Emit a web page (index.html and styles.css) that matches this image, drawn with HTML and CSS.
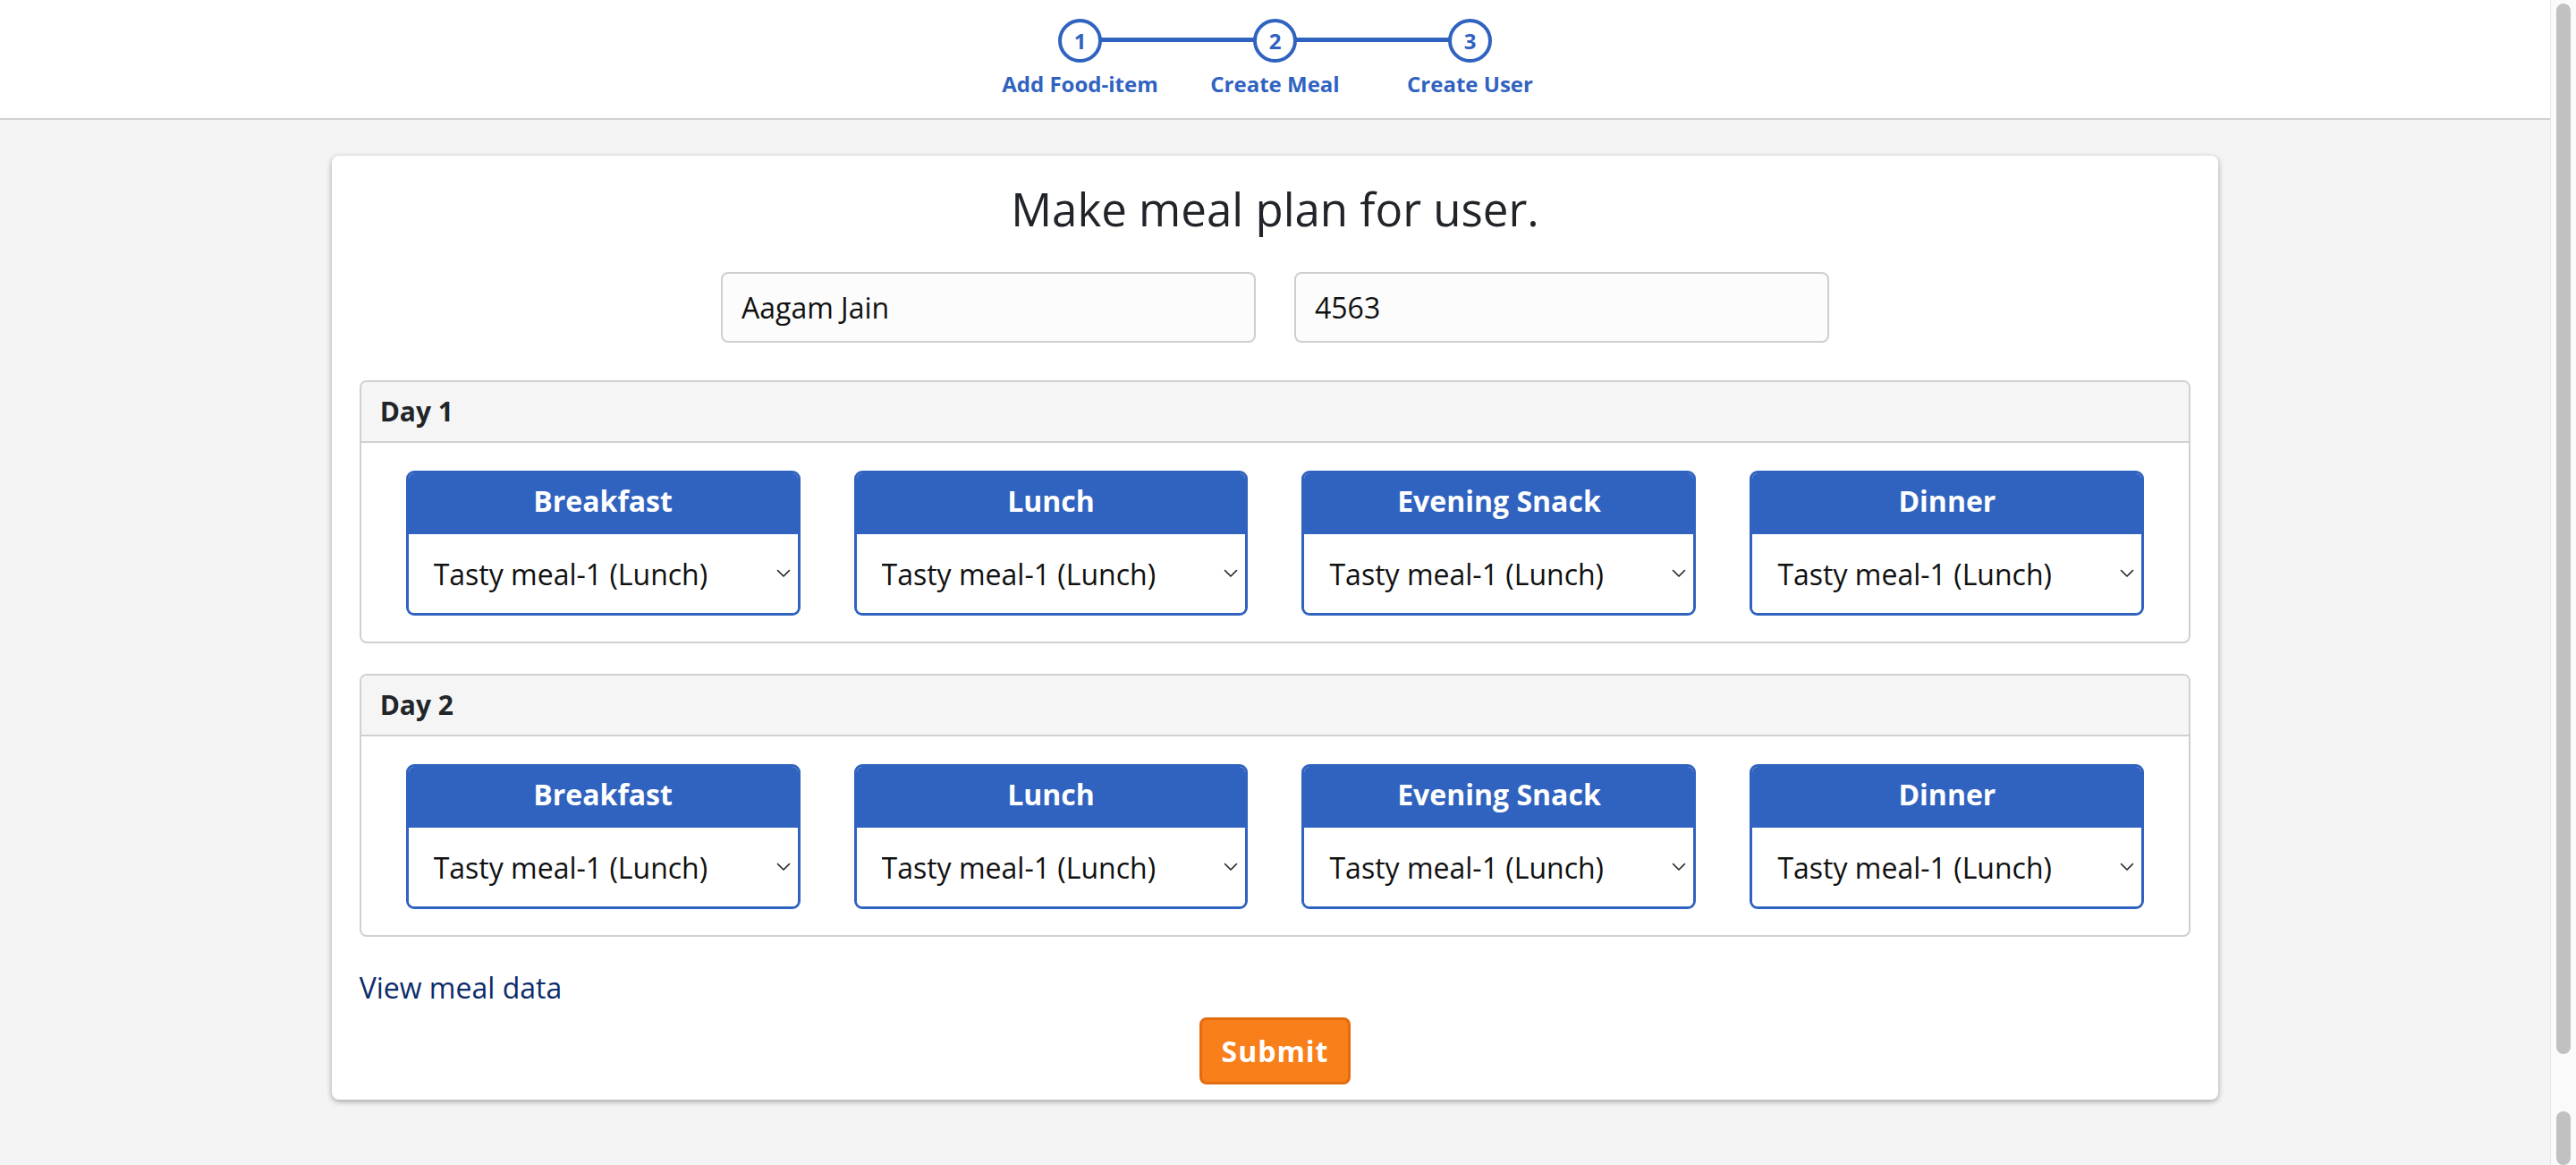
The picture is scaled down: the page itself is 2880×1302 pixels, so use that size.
FILE: index.html
```html
<!DOCTYPE html>
<html lang="en">
<head>
<meta charset="utf-8">
<title>Make meal plan</title>
<link rel="stylesheet" href="styles.css">
</head>
<body>
<div class="page">
  <header class="topbar">
    <ol class="stepper">
      <li class="step"><span class="step-circle">1</span><span class="step-label">Add Food-item</span></li>
      <li class="step"><span class="step-circle">2</span><span class="step-label">Create Meal</span></li>
      <li class="step"><span class="step-circle">3</span><span class="step-label">Create User</span></li>
    </ol>
  </header>
  <main class="card">
    <h1 class="title">Make meal plan for user.</h1>
    <div class="user-row">
      <input class="text-input" type="text" value="Aagam Jain">
      <input class="text-input" type="text" value="4563">
    </div>

    <section class="day">
      <div class="day-header">Day 1</div>
      <div class="day-body">
        <div class="meal"><div class="meal-head">Breakfast</div><div class="meal-select"><select><option>Tasty meal-1 (Lunch)</option></select><svg class="chev" width="16" height="10" viewBox="0 0 16 10"><path d="M1.5 1.5 L8 8 L14.5 1.5" fill="none" stroke="#222" stroke-width="1.6" stroke-linecap="round" stroke-linejoin="round"/></svg></div></div>
        <div class="meal"><div class="meal-head">Lunch</div><div class="meal-select"><select><option>Tasty meal-1 (Lunch)</option></select><svg class="chev" width="16" height="10" viewBox="0 0 16 10"><path d="M1.5 1.5 L8 8 L14.5 1.5" fill="none" stroke="#222" stroke-width="1.6" stroke-linecap="round" stroke-linejoin="round"/></svg></div></div>
        <div class="meal"><div class="meal-head">Evening Snack</div><div class="meal-select"><select><option>Tasty meal-1 (Lunch)</option></select><svg class="chev" width="16" height="10" viewBox="0 0 16 10"><path d="M1.5 1.5 L8 8 L14.5 1.5" fill="none" stroke="#222" stroke-width="1.6" stroke-linecap="round" stroke-linejoin="round"/></svg></div></div>
        <div class="meal"><div class="meal-head">Dinner</div><div class="meal-select"><select><option>Tasty meal-1 (Lunch)</option></select><svg class="chev" width="16" height="10" viewBox="0 0 16 10"><path d="M1.5 1.5 L8 8 L14.5 1.5" fill="none" stroke="#222" stroke-width="1.6" stroke-linecap="round" stroke-linejoin="round"/></svg></div></div>
      </div>
    </section>

    <section class="day day-next">
      <div class="day-header">Day 2</div>
      <div class="day-body">
        <div class="meal"><div class="meal-head">Breakfast</div><div class="meal-select"><select><option>Tasty meal-1 (Lunch)</option></select><svg class="chev" width="16" height="10" viewBox="0 0 16 10"><path d="M1.5 1.5 L8 8 L14.5 1.5" fill="none" stroke="#222" stroke-width="1.6" stroke-linecap="round" stroke-linejoin="round"/></svg></div></div>
        <div class="meal"><div class="meal-head">Lunch</div><div class="meal-select"><select><option>Tasty meal-1 (Lunch)</option></select><svg class="chev" width="16" height="10" viewBox="0 0 16 10"><path d="M1.5 1.5 L8 8 L14.5 1.5" fill="none" stroke="#222" stroke-width="1.6" stroke-linecap="round" stroke-linejoin="round"/></svg></div></div>
        <div class="meal"><div class="meal-head">Evening Snack</div><div class="meal-select"><select><option>Tasty meal-1 (Lunch)</option></select><svg class="chev" width="16" height="10" viewBox="0 0 16 10"><path d="M1.5 1.5 L8 8 L14.5 1.5" fill="none" stroke="#222" stroke-width="1.6" stroke-linecap="round" stroke-linejoin="round"/></svg></div></div>
        <div class="meal"><div class="meal-head">Dinner</div><div class="meal-select"><select><option>Tasty meal-1 (Lunch)</option></select><svg class="chev" width="16" height="10" viewBox="0 0 16 10"><path d="M1.5 1.5 L8 8 L14.5 1.5" fill="none" stroke="#222" stroke-width="1.6" stroke-linecap="round" stroke-linejoin="round"/></svg></div></div>
      </div>
    </section>

    <a class="view-link" href="#">View meal data</a>
    <div class="actions"><button class="submit" type="button">Submit</button></div>
  </main>
</div>
<aside class="scrollbar" aria-hidden="true">
  <div class="thumb"></div>
  <div class="thumb thumb-lower"></div>
</aside>
</body>
</html>
```

FILE: styles.css
```css
* { box-sizing: border-box; }

html, body {
  margin: 0;
  height: 100%;
}

body {
  display: flex;
  overflow: hidden;
  background: #f4f4f4;
  font-family: "Open Sans", "Noto Sans", sans-serif;
  color: #212529;
}

.page {
  flex: 1;
  min-width: 0;
  display: flex;
  flex-direction: column;
  align-items: center;
}

/* ---------- top bar with stepper ---------- */
.topbar {
  align-self: stretch;
  background: #ffffff;
  border-bottom: 2px solid #d2d2d2;
  height: 134px;
  display: flex;
  justify-content: center;
  padding-top: 21px;
}

.stepper {
  list-style: none;
  margin: 0;
  padding: 0;
  display: flex;
}

.step {
  position: relative;
  width: 218px;
  display: flex;
  flex-direction: column;
  align-items: center;
}

.step:not(:last-child)::after {
  content: "";
  position: absolute;
  top: 21px;
  left: 109px;
  width: 218px;
  height: 5px;
  background: #3063bf;
  z-index: 0;
}

.step-circle {
  position: relative;
  z-index: 1;
  width: 49px;
  height: 49px;
  border: 4px solid #3063bf;
  border-radius: 50%;
  background: #ffffff;
  color: #3063bf;
  font-weight: 700;
  font-size: 24px;
  line-height: 41px;
  text-align: center;
}

.step-label {
  margin-top: 7px;
  color: #3063bf;
  font-weight: 700;
  font-size: 24px;
  line-height: 33px;
  white-space: nowrap;
}

/* ---------- main card ---------- */
.card {
  width: 74%;
  margin-top: 40px;
  background: #ffffff;
  border-radius: 8px;
  box-shadow: 0 2px 6px rgba(0, 0, 0, 0.35);
  padding: 25px 31px 17px;
}

.title {
  margin: 0;
  font-size: 51px;
  line-height: 69px;
  font-weight: 400;
  text-align: center;
  color: #212529;
}

.user-row {
  display: flex;
  justify-content: center;
  gap: 43px;
  margin-top: 36px;
}

.text-input {
  width: 598px;
  height: 79px;
  border: 2px solid #cfcfcf;
  border-radius: 8px;
  background: #fcfcfc;
  padding: 0 21px;
  font-family: "Open Sans", "Noto Sans", sans-serif;
  font-size: 32px;
  color: #111;
  outline: none;
}

/* ---------- day sections ---------- */
.day {
  margin-top: 42px;
  border: 2px solid #d0d0d0;
  border-radius: 8px;
  overflow: hidden;
}

.day-next { margin-top: 34px; }

.day-header {
  background: #f5f5f5;
  border-bottom: 2px solid #d0d0d0;
  padding: 13px 21px;
  font-size: 30px;
  line-height: 40px;
  font-weight: 700;
  color: #212529;
}

.day-body {
  display: grid;
  grid-template-columns: repeat(4, 1fr);
  padding: 31px 20px 29px;
}

.meal {
  margin: 0 30px;
  border: 3px solid #3063bf;
  border-radius: 9px;
  overflow: hidden;
  background: #ffffff;
}

.meal-head {
  background: #3063bf;
  color: #ffffff;
  font-size: 32px;
  font-weight: 700;
  line-height: 44px;
  text-align: center;
  padding: 9px 0 15px;
}

.meal-select {
  position: relative;
  height: 88px;
}

.meal-select select {
  appearance: none;
  -webkit-appearance: none;
  width: 100%;
  height: 100%;
  border: 0;
  background: #ffffff;
  padding: 0 40px 0 28px;
  font-family: "Open Sans", "Noto Sans", sans-serif;
  font-size: 32px;
  color: #111;
  outline: none;
}

.chev {
  position: absolute;
  right: 8px;
  top: 39px;
  pointer-events: none;
}

/* ---------- footer of card ---------- */
.view-link {
  display: block;
  margin-top: 35px;
  font-size: 32px;
  line-height: 44px;
  color: #0c2c6a;
  text-decoration: none;
}

.actions {
  display: flex;
  justify-content: center;
  margin-top: 11px;
}

.submit {
  height: 75px;
  padding: 0 22px;
  border: 3px solid #e36c0f;
  border-radius: 8px;
  background: #f87f1a;
  color: #ffffff;
  font-family: "Open Sans", "Noto Sans", sans-serif;
  font-size: 32px;
  line-height: 44px;
  font-weight: 700;
  letter-spacing: 1px;
}

/* ---------- scrollbar ---------- */
.scrollbar {
  width: 29px;
  height: 100vh;
  flex: none;
  background: #fafafa;
  border-left: 1px solid #e6e6e6;
  display: flex;
  flex-direction: column;
  padding: 4px 6px 0 6px;
}

.thumb {
  height: 1181px;
  background: #c1c1c1;
  border-radius: 8px;
}

.thumb-lower {
  height: 60px;
  margin-top: 64px;
}
```
